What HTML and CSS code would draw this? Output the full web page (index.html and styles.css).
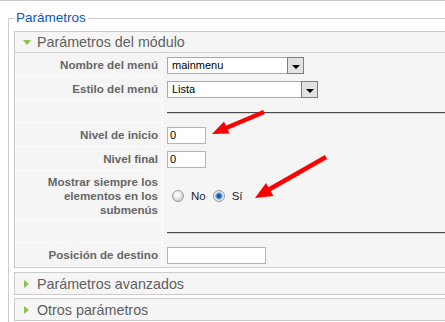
FILE: index.html
```html
<!DOCTYPE html>
<html lang="es">
<head>
  <meta charset="UTF-8" />
  <title>Parámetros</title>
  <link rel="stylesheet" href="styles.css">
</head>
<body>
  <div class="topline"></div>

  <fieldset class="params">
    <legend>Parámetros</legend>

    <!-- Open panel -->
    <div class="panel open">
      <h3 class="panel-title"><span class="toggle"></span>Parámetros del módulo</h3>
      <table class="paramlist">
        <tr>
          <td class="key">Nombre del menú</td>
          <td class="val">
            <div class="select menu-name"><span>mainmenu</span><i class="drop"></i></div>
          </td>
        </tr>
        <tr>
          <td class="key">Estilo del menú</td>
          <td class="val">
            <div class="select menu-style"><span>Lista</span><i class="drop"></i></div>
          </td>
        </tr>
        <tr class="spacer">
          <td class="key"></td>
          <td class="val"><div class="rule"></div></td>
        </tr>
        <tr>
          <td class="key">Nivel de inicio</td>
          <td class="val"><input class="text short" type="text" value="0"></td>
        </tr>
        <tr>
          <td class="key">Nivel final</td>
          <td class="val"><input class="text short" type="text" value="0"></td>
        </tr>
        <tr>
          <td class="key multi">Mostrar siempre los elementos en los submenús</td>
          <td class="val">
            <div class="radios">
              <span class="radio"></span><span class="radio-label">No</span>
              <span class="radio checked"></span><span class="radio-label">Sí</span>
            </div>
          </td>
        </tr>
        <tr class="spacer">
          <td class="key"></td>
          <td class="val"><div class="rule"></div></td>
        </tr>
        <tr>
          <td class="key">Posición de destino</td>
          <td class="val"><input class="text long" type="text" value=""></td>
        </tr>
      </table>
    </div>

    <!-- Collapsed panels -->
    <div class="panel">
      <h3 class="panel-title"><span class="toggle"></span>Parámetros avanzados</h3>
    </div>
    <div class="panel">
      <h3 class="panel-title"><span class="toggle"></span>Otros parámetros</h3>
    </div>
  </fieldset>

  <!-- Red annotation arrows -->
  <svg class="arrows" width="445" height="322" viewBox="0 0 445 322">
    <line x1="264" y1="112" x2="226" y2="128" stroke="#ff0000" stroke-width="4.5" />
    <polygon points="212,134 229.5,133.5 224,121.5" fill="#ff0000" />
    <line x1="326" y1="157" x2="269" y2="189.5" stroke="#ff0000" stroke-width="4.5" />
    <polygon points="255,198 273.5,196 266,183" fill="#ff0000" />
  </svg>
</body>
</html>
```

FILE: styles.css
```css
body {
  margin: 0;
  font-family: "Liberation Sans", Arial, sans-serif;
  font-size: 11px;
  background: #fff;
  height: 322px;
  overflow: hidden;
  position: relative;
}

.topline {
  border-top: 1px solid #ccc;
}

.params {
  margin: 10px 0 0 8px;
  padding: 6px 0 0 5px;
  border: 1px solid #ccc;
  width: 480px;
  box-sizing: border-box;
}

.params legend {
  padding: 0 2px;
  color: #0b55c4;
  font-size: 13.5px;
  line-height: 14px;
}

.panel {
  border: 1px solid #ccc;
  background: #f5f5f5;
  margin-bottom: 3px;
}

.panel.open {
  margin-bottom: 4px;
}

.panel-title {
  margin: 0;
  height: 21px;
  padding-left: 8px;
  display: flex;
  align-items: center;
  font-size: 14.3px;
  font-weight: normal;
  color: #5f5f5f;
}

.open .panel-title {
  height: 20px;
  border-bottom: 1px solid #ccc;
}

.toggle {
  width: 14px;
  display: flex;
  align-items: center;
}

.toggle::before {
  content: "";
  border-top: 4px solid transparent;
  border-bottom: 4px solid transparent;
  border-left: 5px solid #8cc152;
  margin-left: 1px;
}

.open .toggle::before {
  border-left: 4px solid transparent;
  border-right: 4px solid transparent;
  border-top: 5px solid #8cc152;
  border-bottom: 0;
  margin: 1px 0 0 0;
}

.paramlist {
  width: 100%;
  border-collapse: separate;
  border-spacing: 0;
}

.paramlist .key {
  width: 142px;
  height: 17px;
  padding: 3px 4px 3px 1px;
  text-align: right;
  color: #666;
  font-size: 11.6px;
  font-weight: bold;
  line-height: 14px;
  border-right: 1px solid #fcfcfc;
  border-bottom: 1px solid #fcfcfc;
}

.paramlist .key.multi {
  padding-top: 4px;
  padding-bottom: 3px;
}

.paramlist .val {
  padding: 3px 4px;
  vertical-align: middle;
}

.paramlist .spacer td {
  height: 21px;
  padding: 0;
  vertical-align: top;
}

.paramlist .spacer .val {
  padding-left: 4px;
}

.rule {
  margin-top: 11px;
  border-top: 1px solid #4a4a4a;
  border-bottom: 1px solid #d6d6d6;
}

.select {
  display: flex;
  height: 17px;
  border: 1px solid #a8a8a8;
  box-sizing: border-box;
  background: #fff;
  color: #000;
  line-height: 15px;
}

.select span {
  padding-left: 4px;
}

.menu-name {
  width: 137px;
}

.menu-style {
  width: 151px;
}

.drop {
  margin: -1px -1px -1px auto;
  width: 17px;
  border: 1px solid #7c7c7c;
  background: #e2e2e2;
  box-sizing: border-box;
  display: flex;
  justify-content: center;
  align-items: flex-end;
  padding-bottom: 4px;
}

.drop::after {
  content: "";
  border-left: 4px solid transparent;
  border-right: 4px solid transparent;
  border-top: 4px solid #000;
}

.text {
  display: block;
  height: 17px;
  margin: 0;
  padding: 0 2px;
  border: 1px solid #b4b4b4;
  box-sizing: border-box;
  background: #fff;
  font-family: inherit;
  font-size: 11px;
  color: #000;
  outline: none;
}

.text.short {
  width: 39px;
}

.text.long {
  width: 99px;
}

.radios {
  display: flex;
  align-items: center;
  padding-left: 5px;
}

.radio {
  width: 12px;
  height: 12px;
  border: 1px solid #9a9a9a;
  border-radius: 50%;
  box-sizing: border-box;
  background: radial-gradient(circle at 40% 35%, #fff 0, #f0f0f0 3px, #d2d2d2 6px);
}

.radio.checked {
  background: radial-gradient(circle, #0f3e75 0, #2a6ebf 2px, #7fb0e0 3.2px, #eef3f8 4.2px, #d6d6d6 6px);
}

.radio-label {
  margin: 0 7px;
  color: #222;
  font-size: 11.5px;
}

.arrows {
  position: absolute;
  top: 0;
  left: 0;
  pointer-events: none;
}
```
